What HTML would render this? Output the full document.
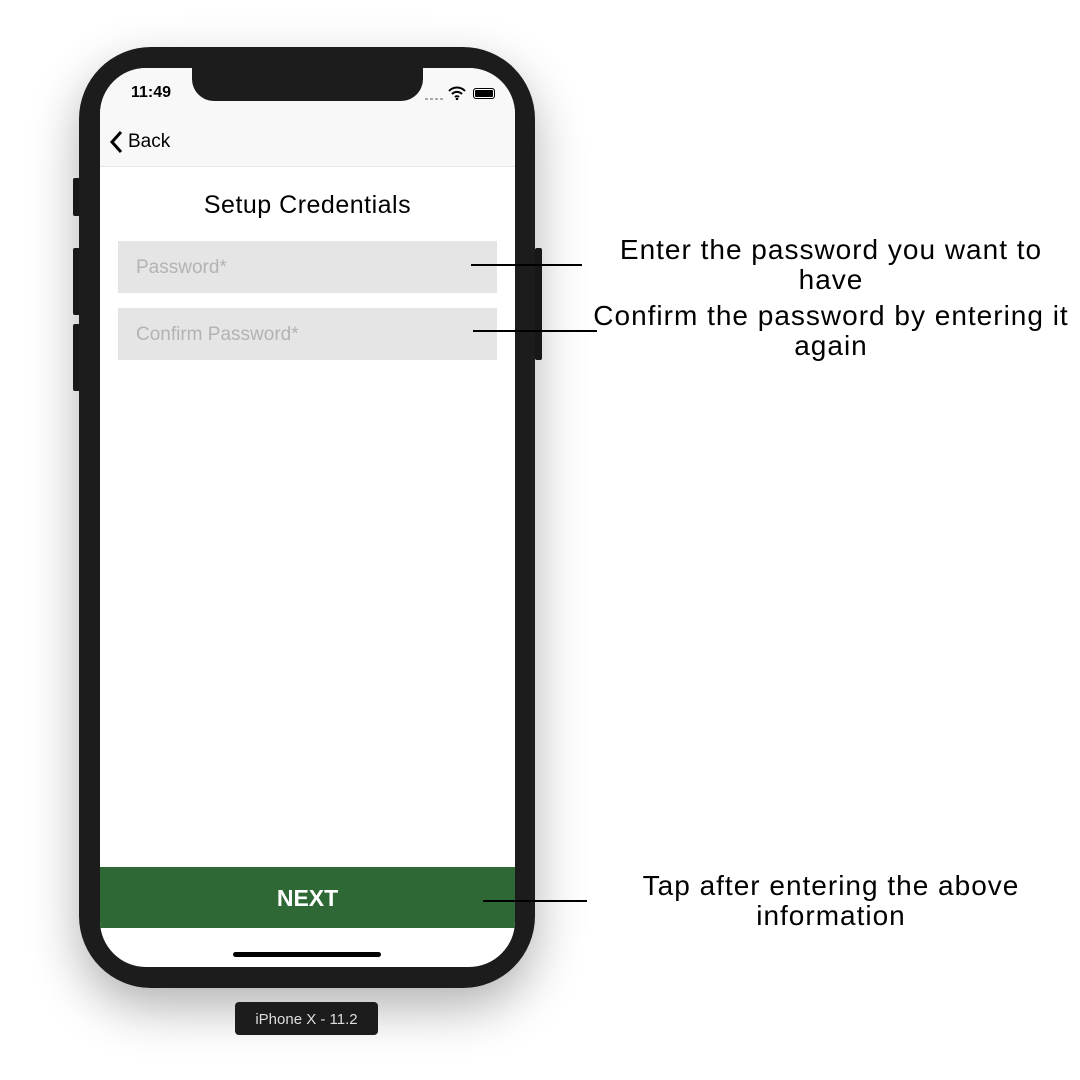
<!DOCTYPE html>
<html><head><style>
body{margin:0;width:1080px;height:1080px;background:#fff;position:relative;overflow:hidden;font-family:"Liberation Sans",sans-serif}
.a{position:absolute}
.phone{left:79px;top:47px;width:456px;height:941px;background:#1c1c1c;border-radius:72px;box-shadow:0 20px 50px rgba(0,0,0,.3)}
.screen{left:100px;top:68px;width:415px;height:899px;background:#fff;border-radius:46px;overflow:hidden}
.btn{background:#1c1c1c;width:7px}
.field{left:118px;width:379px;height:52px;background:#e5e5e5;color:#b3b3b3;font-size:19px;line-height:54px;text-indent:18px}
.line{height:2px;background:#000}
.t{color:#000;font-size:28px;letter-spacing:1px;text-align:center;line-height:30px;width:490px;left:586px}
</style></head><body>
<div class="a btn" style="left:73px;top:178px;height:38px;border-radius:2px"></div>
<div class="a btn" style="left:73px;top:248px;height:67px;border-radius:2px"></div>
<div class="a btn" style="left:73px;top:324px;height:67px;border-radius:2px"></div>
<div class="a btn" style="left:535px;top:248px;height:112px;border-radius:2px"></div>
<div class="a phone"></div>
<div class="a screen">
 <div class="a" style="left:0;top:0;width:415px;height:98px;background:#f8f8f8;border-bottom:1px solid #e6e6e6"></div>
 <div class="a" style="left:31px;top:16px;font-size:16px;font-weight:bold">11:49</div>
 <div class="a" style="left:325px;top:30px;width:20px;height:2px;background:repeating-linear-gradient(90deg,#aaa 0 3px,transparent 3px 5px)"></div>
 <svg class="a" style="left:348px;top:18px" width="18" height="14" viewBox="0 0 18 14"><path d="M1 5a11 11 0 0 1 16 0M4 8a7 7 0 0 1 10 0M7 11a3 3 0 0 1 4 0" stroke="#000" stroke-width="2" fill="none"/><circle cx="9" cy="13" r="1.3"/></svg>
 <div class="a" style="left:373px;top:20px;width:20px;height:9px;border:1.5px solid #000;border-radius:3px;background:#000;box-shadow:inset 0 0 0 1px #fff"></div>
 <svg class="a" style="left:9px;top:62px" width="16" height="24" viewBox="0 0 16 24"><path d="M12 2 3 12l9 10" stroke="#000" stroke-width="3" fill="none"/></svg>
 <div class="a" style="left:28px;top:63px;font-size:19px">Back</div>
 <div class="a" style="left:0;top:123px;width:415px;text-align:center;font-size:25px;letter-spacing:.5px">Setup Credentials</div>
 <div class="a" style="left:0;top:799px;width:415px;height:61px;background:#2e6835;color:#fff;font-weight:bold;font-size:23px;text-align:center;line-height:63px">NEXT</div>
 <div class="a" style="left:133px;top:884px;width:148px;height:5px;background:#000;border-radius:3px"></div>
</div>
<div class="a" style="left:192px;top:60px;width:231px;height:41px;background:#1c1c1c;border-radius:0 0 22px 22px"></div>
<div class="a field" style="top:241px">Password*</div>
<div class="a field" style="top:308px">Confirm Password*</div>
<div class="a" style="left:235px;top:1002px;width:143px;height:33px;background:#1c1c1c;border-radius:4px;color:#ddd;font-size:15px;text-align:center;line-height:35px">iPhone X - 11.2</div>
<div class="a line" style="left:471px;top:264px;width:111px"></div>
<div class="a line" style="left:473px;top:330px;width:124px"></div>
<div class="a line" style="left:483px;top:900px;width:104px"></div>
<div class="a t" style="top:235px">Enter the password you want to have</div>
<div class="a t" style="top:301px">Confirm the password by entering it again</div>
<div class="a t" style="top:871px;left:611px;width:440px">Tap after entering the above information</div>
</body></html>
